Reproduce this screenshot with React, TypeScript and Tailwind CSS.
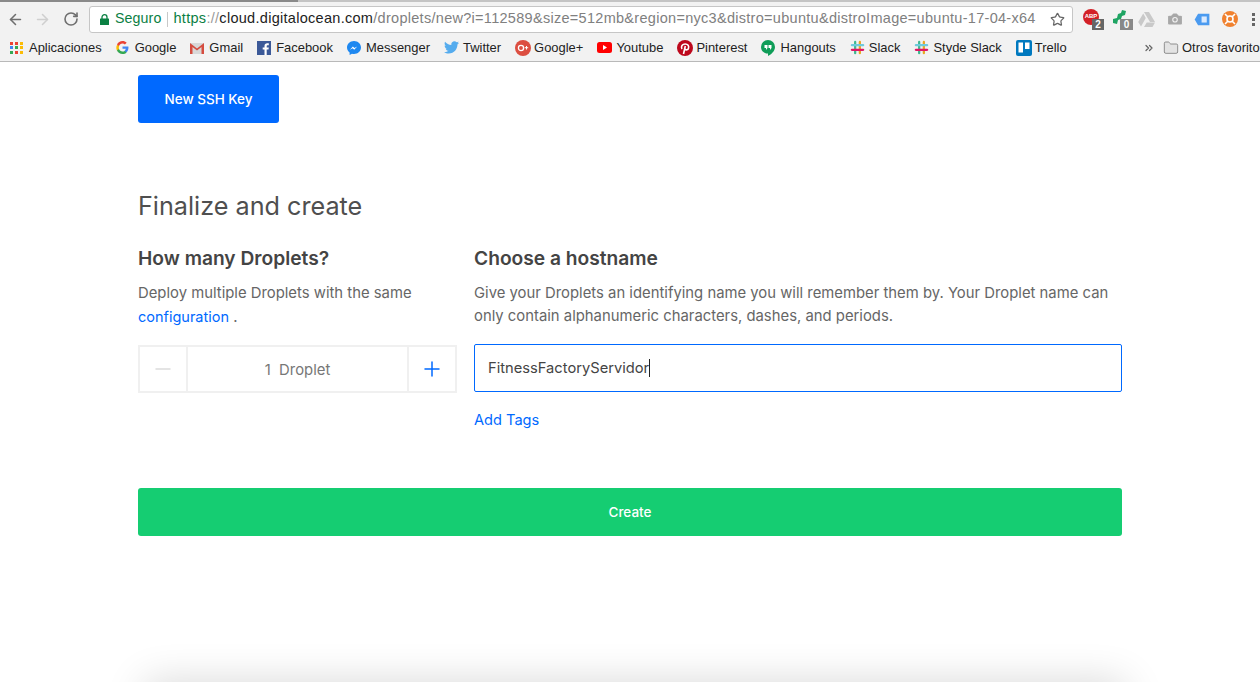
import { ArrowLeft, ArrowRight, RotateCw, Star, Camera, ChevronsRight, Folder, Minus, Plus } from "lucide-react";
import { ReactNode } from "react";

function Slack() {
    return (
        <svg width="15" height="15" viewBox="0 0 16 16" fill="none" strokeWidth="2.4" strokeLinecap="round">
            <path d="M5.5 2v12" stroke="#3eb890" />
            <path d="M10.5 2v12" stroke="#e8a723" />
            <path d="M2 5.5h12" stroke="#6ecadc" />
            <path d="M2 10.5h12" stroke="#e01765" />
        </svg>
    );
}

const bookmarks: { label: string; icon: ReactNode }[] = [
    {
        label: "Aplicaciones",
        icon: (
            <div className="grid grid-cols-3 gap-[1.5px] w-[13px]">
                {["#ea4335", "#ea4335", "#fbbc05", "#4285f4", "#34a853", "#fbbc05", "#34a853", "#ea4335", "#fbbc05"].map((c, i) => (
                    <svg key={i} width="3" height="3"><rect width="3" height="3" fill={c} /></svg>
                ))}
            </div>
        ),
    },
    {
        label: "Google",
        icon: (
            <svg width="13" height="13" viewBox="0 0 24 24">
                <path fill="#4285f4" d="M23 12.3c0-.8-.1-1.600-.2-2.300H12v4.400h6.200c-.3 1.400-1.100 2.600-2.300 3.400v2.800h3.700c2.100-2 3.400-4.900 3.400-8.300z" />
                <path fill="#34a853" d="M12 24c3.100 0 5.700-1 7.600-2.800l-3.700-2.800c-1 .7-2.300 1.100-3.900 1.100-3 0-5.500-2-6.400-4.700H1.800v2.900C3.700 21.400 7.600 24 12 24z" />
                <path fill="#fbbc05" d="M5.600 14.800c-.5-1.400-.5-3 0-4.500V7.400H1.800c-1.600 3.100-1.600 6.800 0 10z" />
                <path fill="#ea4335" d="M12 4.800c1.700 0 3.200.6 4.400 1.700l3.300-3.300C17.700 1.200 15.100 0 12 0 7.600 0 3.700 2.600 1.800 6.400l3.800 2.900C6.500 6.700 9 4.800 12 4.800z" />
            </svg>
        ),
    },
    {
        label: "Gmail",
        icon: (
            <svg width="14" height="12" viewBox="0 0 14 12">
                <path fill="#d8d8d8" d="M0 1h14v11H0z" />
                <path fill="#d54c3f" d="M0 1l7 5.500L14 1v11h-2.500V5L7 8.500 2.500 5v7H0z" />
            </svg>
        ),
    },
    {
        label: "Facebook",
        icon: (
            <svg width="14" height="14" viewBox="0 0 14 14">
                <rect width="14" height="14" fill="#3b5998" />
                <path fill="#fff" d="M9.700 14V8.600h1.800l.3-2.100H9.700V5.200c0-.6.200-1 1-1h1.100V2.300c-.2 0-.9-.1-1.600-.1-1.600 0-2.700 1-2.700 2.800v1.500H5.700v2.100h1.800V14z" />
            </svg>
        ),
    },
    {
        label: "Messenger",
        icon: (
            <svg width="14" height="14" viewBox="0 0 14 14">
                <path fill="#1e88f0" d="M7 0C3.100 0 0 2.900 0 6.500c0 2 1 3.800 2.600 5V14l2.400-1.300c.6.200 1.300.3 2 .3 3.900 0 7-2.900 7-6.500S10.900 0 7 0z" />
                <path fill="#fff" d="M2.900 8.700l3-3.200 1.500 1.500 2.800-1.500-3 3.200-1.500-1.500z" />
            </svg>
        ),
    },
    {
        label: "Twitter",
        icon: (
            <svg width="15" height="13" viewBox="0 0 24 20">
                <path fill="#55acee" d="M24 2.400c-.9.400-1.800.7-2.800.8 1-.6 1.800-1.600 2.200-2.700-1 .6-2 1-3.100 1.200C19.300.7 18 0 16.600 0c-2.700 0-4.900 2.200-4.900 4.900 0 .4 0 .8.100 1.100C7.700 5.800 4.100 3.900 1.700.9c-.4.700-.7 1.600-.7 2.500 0 1.700.9 3.200 2.200 4.100-.8 0-1.600-.2-2.200-.6v.1c0 2.400 1.700 4.400 3.900 4.800-.7.200-1.500.2-2.200.1.600 2 2.400 3.400 4.600 3.400-2 1.600-4.400 2.300-7.300 2.100 2.200 1.400 4.800 2.200 7.500 2.200 9.100 0 14-7.500 14-14v-.6c1-.7 1.800-1.600 2.500-2.600z" />
            </svg>
        ),
    },
    {
        label: "Google+",
        icon: (
            <svg width="16" height="16" viewBox="0 0 16 16">
                <circle cx="8" cy="8" r="8" fill="#dc4e41" />
                <circle cx="6" cy="8" r="2.600" fill="none" stroke="#fff" strokeWidth="1.300" />
                <path stroke="#fff" strokeWidth="1" d="M11.500 6v3.500M9.800 7.700h3.400" />
            </svg>
        ),
    },
    {
        label: "Youtube",
        icon: (
            <svg width="15" height="11" viewBox="0 0 15 11">
                <rect width="15" height="11" rx="2.500" fill="#f00" />
                <path fill="#fff" d="M6 3l4 2.500L6 8z" />
            </svg>
        ),
    },
    {
        label: "Pinterest",
        icon: (
            <svg width="16" height="16" viewBox="0 0 16 16">
                <circle cx="8" cy="8" r="8" fill="#bd081c" />
                <path fill="none" stroke="#fff" strokeWidth="1.600" d="M5 9c-1.500-2.500.5-5 3.200-5s4 2 3.300 4.200C11 10 9 10.500 8 9M8.300 6L6.500 14" />
            </svg>
        ),
    },
    {
        label: "Hangouts",
        icon: (
            <svg width="14" height="16" viewBox="0 0 14 16">
                <path fill="#0f9d58" d="M7 0a7 7 0 0 0-7 7c0 3.800 3.200 6.600 7 6.600V16c3.500-1.700 7-5 7-9a7 7 0 0 0-7-7z" />
                <path fill="#fff" d="M3.500 5h3v3l-1.500 2V8H3.500zM7.500 5h3v3L9 10V8H7.500z" />
            </svg>
        ),
    },
    { label: "Slack", icon: <Slack /> },
    { label: "Styde Slack", icon: <Slack /> },
    {
        label: "Trello",
        icon: (
            <svg width="16" height="16" viewBox="0 0 16 16">
                <rect width="16" height="16" rx="2" fill="#0079bf" />
                <rect x="2.500" y="2.500" width="4.500" height="10" fill="#fff" />
                <rect x="9" y="2.500" width="4.500" height="6.500" fill="#fff" />
            </svg>
        ),
    },
];

function Extensions() {
    return (
        <div className="flex items-center gap-[9px] ml-[10px] shrink-0">
            <div className="relative w-[20px] h-[22px]">
                <svg width="16" height="16" viewBox="0 0 16 16" className="mt-[1px]">
                    <circle cx="8" cy="8" r="8" fill="#d32027" />
                </svg>
                <span className="absolute left-0 top-[5px] w-[16px] text-white text-[6px] leading-[7px] text-center font-bold">ABP</span>
                <span className="absolute right-[-1px] bottom-0 w-[12px] h-[11px] bg-[#666] text-white text-[10px] leading-[11px] text-center font-bold">2</span>
            </div>
            <div className="relative w-[20px] h-[22px]">
                <svg width="16" height="16" viewBox="0 0 16 16" className="mt-[1px]">
                    <path fill="#1fa463" d="M1 10l4-1 1-4 3-1 1-3 4 1-1 4-3 1-1 3-3 1-1 4-4-1z" />
                </svg>
                <span className="absolute right-[-1px] bottom-0 w-[13px] h-[11px] bg-[#888] text-white text-[10px] leading-[11px] text-center font-bold">0</span>
            </div>
            <svg width="17" height="15" viewBox="0 0 17 15" className="-ml-[3px]">
                <path fill="#c9c9c9" d="M6 0h5l6 10h-5zM5.200 1.500L7.800 6 3 14.500.2 10zM6 15l2.700-4.500H17L14.500 15z" />
            </svg>
            <Camera size={18} fill="#a8a8a8" stroke="#f2f2f2" strokeWidth={1.500} className="ml-[2px]" />
            <svg width="16" height="13" viewBox="0 0 17 15" className="ml-[1px]">
                <path fill="#4b9bf0" d="M4 1h13v13H4L0 7.500z" />
                <rect x="8" y="4" width="6" height="7" fill="#dbeafe" />
            </svg>
            <svg width="16" height="16" viewBox="0 0 16 16" className="ml-[3px]">
                <circle cx="8" cy="8" r="8" fill="#f0812f" />
                <circle cx="8" cy="8" r="3" fill="none" stroke="#fff" strokeWidth="1.600" />
                <path stroke="#fff" strokeWidth="1.600" d="M3 3l3 3M13 3l-3 3M3 13l3-3M13 13l-3-3" />
            </svg>
            <div className="flex flex-col gap-[2px] ml-[5px]">
                <div className="w-[3px] h-[3px] bg-[#666]" />
                <div className="w-[3px] h-[3px] bg-[#666]" />
                <div className="w-[3px] h-[3px] bg-[#666]" />
            </div>
        </div>
    );
}

function BrowserChrome() {
    return (
        <div className="bg-[#f2f2f2] border-b border-[#b9b9b9] h-[62px] shrink-0 font-['Liberation_Sans',sans-serif] overflow-hidden">
            <div className="flex h-[2px]">
                <div className="w-[298px] bg-[#8a8a8a]" />
                <div className="flex-1 bg-[#c4c4c4]" />
            </div>
            <div className="flex items-center h-[31px] pt-[3px] pl-[7px]">
                <ArrowLeft size={17} color="#6f6f6f" strokeWidth={2.200} />
                <ArrowRight size={17} color="#cfcfcf" strokeWidth={2.200} className="ml-[10px]" />
                <RotateCw size={16} color="#6f6f6f" strokeWidth={2.400} className="ml-[12px]" />
                <div className="flex items-center w-[984px] h-[27px] ml-[10px] bg-white border border-[#c6c6c6] rounded-[3px] pl-[9px] pr-[6px] text-[14.200px] tracking-[0.120px] whitespace-nowrap shrink-0">
                    <svg width="9" height="11" viewBox="0 0 9 11" className="shrink-0 ml-[1px]">
                        <path fill="none" stroke="#0b8043" strokeWidth="1.300" d="M2 5V3.200a2.500 2.500 0 0 1 5 0V5" />
                        <rect y="4.500" width="9" height="6.500" rx="0.500" fill="#0b8043" />
                    </svg>
                    <span className="text-[#0b8043] ml-[6px]">Seguro</span>
                    <div className="w-px h-[15px] bg-[#c8c8c8] ml-[6px] mr-[5px]" />
                    <div className="flex-1 overflow-hidden text-[14.500px] tracking-[0.290px]">
                        <span className="text-[#0b8043]">https</span>
                        <span className="text-[#9a9a9a]">://</span>
                        <span className="text-[#222]">cloud.digitalocean.com</span>
                        <span className="text-[#808080]">/droplets/new?i=112589&size=512mb&region=nyc3&distro=ubuntu&distroImage=ubuntu-17-04-x64</span>
                    </div>
                    <Star size={15} color="#666" strokeWidth={2} className="ml-[8px] shrink-0 -translate-x-[1px]" />
                </div>
                <Extensions />
            </div>
            <div className="flex items-center h-[27px] pt-[3px] pl-[10px] text-[12.950px] text-[#222] whitespace-nowrap">
                {bookmarks.map((b) => (
                    <div key={b.label} className="flex items-center shrink-0 mr-[14px]">
                        <div className="w-[19px] flex items-center">{b.icon}</div>
                        <span>{b.label}</span>
                    </div>
                ))}
                <div className="ml-auto flex items-center w-[117px] shrink-0">
                    <ChevronsRight size={12} color="#666" strokeWidth={2.500} className="shrink-0" />
                    <Folder size={16} color="#777" fill="#e3e3e3" strokeWidth={1.200} className="ml-[8px] shrink-0" />
                    <span className="ml-[3px]">Otros favoritos</span>
                </div>
            </div>
        </div>
    );
}

export default function App() {
    return (
        <div className="h-[682px] overflow-hidden bg-white flex flex-col font-['Inter',sans-serif]">
            <BrowserChrome />
            <div className="w-[984px] ml-[138px] pt-[13px]">
                <button className="w-[141px] h-[48px] pt-[1px] bg-[#0069ff] rounded-[3px] text-white text-[13.500px] font-medium">New SSH Key</button>

                <h2 className="mt-[67px] text-[25.200px] leading-[32px] text-[#4f4f4f]">Finalize and create</h2>

                <div className="flex mt-[23px]">
                    <div className="w-[319px] mr-[17px] shrink-0">
                        <h3 className="text-[19.200px] leading-[26px] font-semibold text-[#444]">How many Droplets?</h3>
                        <p className="mt-[11px] text-[14.850px] leading-[23px] text-[#666]">
                            Deploy multiple Droplets with the same <span className="text-[#0069ff] text-[14.500px]">configuration</span> .
                        </p>
                        <div className="flex mt-[16px] h-[48px] border-2 border-[#f0f0f0] text-[#777]">
                            <div className="w-[48px] flex items-center justify-center border-r-2 border-[#f0f0f0]">
                                <Minus size={24} color="#dcdcdc" strokeWidth={1.500} />
                            </div>
                            <div className="flex-1 flex items-center justify-center pt-[2px] text-[14.850px]">1&nbsp; Droplet</div>
                            <div className="w-[48px] flex items-center justify-center border-l-2 border-[#f0f0f0]">
                                <Plus size={24} color="#0069ff" strokeWidth={1.500} />
                            </div>
                        </div>
                    </div>
                    <div className="flex-1">
                        <h3 className="text-[19.200px] leading-[26px] font-semibold text-[#444]">Choose a hostname</h3>
                        <p className="mt-[11px] text-[14.850px] leading-[23px] text-[#666]">
                            Give your Droplets an identifying name you will remember them by. Your Droplet name can only contain alphanumeric characters, dashes, and periods.
                        </p>
                        <div className="flex items-center mt-[16px] h-[48px] border border-[#0069ff] rounded-[2px] px-[13px] text-[14.700px] text-[#444]">
                            FitnessFactoryServidor
                            <span className="w-px h-[18px] bg-[#222]" />
                        </div>
                        <a className="block mt-[17px] text-[14.600px] leading-[22px] text-[#0069ff]">Add Tags</a>
                    </div>
                </div>

                <button className="block w-full h-[48px] mt-[57px] pt-[1px] bg-[#15cd72] rounded-[3px] text-white text-[13.500px] font-medium">Create</button>
            </div>
            <div className="w-[980px] ml-[145px] mt-[146px] h-[40px] shrink-0 shadow-[0_0_40px_rgba(0,0,0,0.16)]" />
        </div>
    );
}
